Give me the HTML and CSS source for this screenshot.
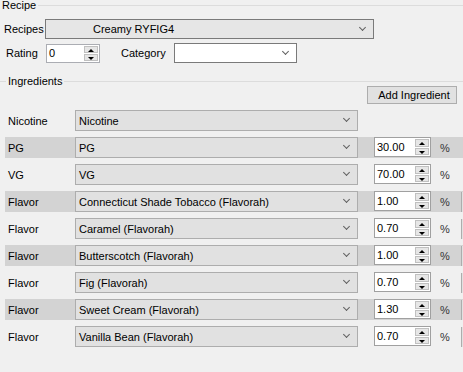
FILE: index.html
```html
<!DOCTYPE html>
<html lang="en">
<head>
  <meta charset="UTF-8">
  <title>Recipe</title>
  <link rel="stylesheet" href="styles.css">
</head>
<body>

<div class="group-head recipe-head">
  <span class="group-title">Recipe</span>
  <span class="group-line"></span>
</div>

<div class="recipe-row first">
  <span class="lbl lbl-recipes">Recipes</span>
  <div class="dropdown recipes"><span>Creamy RYFIG4</span><i class="chev"></i></div>
</div>

<div class="recipe-row second">
  <span class="lbl lbl-rating">Rating</span>
  <div class="spin rating"><span>0</span><div class="spin-btns"><i class="up"></i><i class="down"></i></div></div>
  <span class="lbl lbl-category">Category</span>
  <div class="dropdown category"><span></span><i class="chev"></i></div>
</div>

<div class="group-head ing-head">
  <span class="group-line short"></span>
  <span class="group-title">Ingredients</span>
  <span class="group-line"></span>
</div>

<div class="toolbar">
  <button class="add-btn">Add Ingredient</button>
</div>

<div class="ingredients">
  <div class="ing-row">
    <span class="ing-type">Nicotine</span>
    <div class="combo"><span>Nicotine</span><i class="chev"></i></div>
  </div>
  <div class="ing-row band">
    <span class="ing-type">PG</span>
    <div class="combo"><span>PG</span><i class="chev"></i></div>
    <div class="spin amount"><span>30.00</span><div class="spin-btns"><i class="up"></i><i class="down"></i></div></div>
    <span class="pct">%</span>
  </div>
  <div class="ing-row">
    <span class="ing-type">VG</span>
    <div class="combo"><span>VG</span><i class="chev"></i></div>
    <div class="spin amount"><span>70.00</span><div class="spin-btns"><i class="up"></i><i class="down"></i></div></div>
    <span class="pct">%</span>
  </div>
  <div class="ing-row band">
    <span class="ing-type">Flavor</span>
    <div class="combo"><span>Connecticut Shade Tobacco (Flavorah)</span><i class="chev"></i></div>
    <div class="spin amount"><span>1.00</span><div class="spin-btns"><i class="up"></i><i class="down"></i></div></div>
    <span class="pct">%</span>
    <button class="row-btn"></button>
  </div>
  <div class="ing-row">
    <span class="ing-type">Flavor</span>
    <div class="combo"><span>Caramel (Flavorah)</span><i class="chev"></i></div>
    <div class="spin amount"><span>0.70</span><div class="spin-btns"><i class="up"></i><i class="down"></i></div></div>
    <span class="pct">%</span>
    <button class="row-btn"></button>
  </div>
  <div class="ing-row band">
    <span class="ing-type">Flavor</span>
    <div class="combo"><span>Butterscotch (Flavorah)</span><i class="chev"></i></div>
    <div class="spin amount"><span>1.00</span><div class="spin-btns"><i class="up"></i><i class="down"></i></div></div>
    <span class="pct">%</span>
    <button class="row-btn"></button>
  </div>
  <div class="ing-row">
    <span class="ing-type">Flavor</span>
    <div class="combo"><span>Fig (Flavorah)</span><i class="chev"></i></div>
    <div class="spin amount"><span>0.70</span><div class="spin-btns"><i class="up"></i><i class="down"></i></div></div>
    <span class="pct">%</span>
    <button class="row-btn"></button>
  </div>
  <div class="ing-row band">
    <span class="ing-type">Flavor</span>
    <div class="combo"><span>Sweet Cream (Flavorah)</span><i class="chev"></i></div>
    <div class="spin amount"><span>1.30</span><div class="spin-btns"><i class="up"></i><i class="down"></i></div></div>
    <span class="pct">%</span>
    <button class="row-btn"></button>
  </div>
  <div class="ing-row">
    <span class="ing-type">Flavor</span>
    <div class="combo"><span>Vanilla Bean (Flavorah)</span><i class="chev"></i></div>
    <div class="spin amount"><span>0.70</span><div class="spin-btns"><i class="up"></i><i class="down"></i></div></div>
    <span class="pct">%</span>
    <button class="row-btn"></button>
  </div>
</div>

</body>
</html>
```

FILE: styles.css
```css
* {
  box-sizing: border-box;
}

body {
  margin: 0;
  width: 463px;
  height: 372px;
  overflow: hidden;
  background: #f0f0f0;
  font-family: "Liberation Sans", Arial, sans-serif;
  font-size: 11px;
  color: #000;
}

/* group box headers */
.group-head {
  display: flex;
  align-items: center;
  height: 11px;
}

.group-title {
  line-height: 11px;
  padding: 0 2px;
}

.group-line {
  flex: 1;
  height: 1px;
  background: #dcdcdc;
}

.group-line.short {
  flex: 0 0 6px;
}

/* recipe fields */
.recipe-row {
  display: flex;
  align-items: center;
}

.recipe-row > * {
  flex: none;
}

.recipe-row.first {
  margin-top: 8px;
  height: 20px;
}

.recipe-row.second {
  margin-top: 4px;
  height: 20px;
}

.lbl-recipes {
  margin-left: 4px;
  width: 41px;
}

.lbl-rating {
  margin-left: 6px;
  width: 40px;
}

.lbl-category {
  margin-left: 21px;
  width: 53px;
}

.dropdown {
  position: relative;
  height: 20px;
  border: 1px solid #7a7a7a;
  display: flex;
  align-items: center;
}

.dropdown.recipes {
  width: 329px;
  background: #e6e6e6;
  padding-left: 47px;
}

.dropdown.category {
  width: 123px;
  background: #fff;
}

.chev {
  position: absolute;
  right: 8px;
  top: 5px;
  width: 5px;
  height: 5px;
  border-right: 1px solid #606060;
  border-bottom: 1px solid #606060;
  transform: rotate(45deg);
}

/* numeric up-down */
.spin {
  position: relative;
  height: 20px;
  background: #fff;
  border: 1px solid #a0a0a0;
  display: flex;
  align-items: center;
  padding-left: 2px;
}

.spin.rating {
  width: 54px;
  height: 19px;
  border-color: #abadb3;
}

.spin-btns {
  position: absolute;
  right: 1px;
  top: 1px;
  bottom: 1px;
  width: 14px;
  display: flex;
  flex-direction: column;
  gap: 1px;
}

.spin-btns i {
  flex: 1;
  position: relative;
  background: #e6e6e6;
  border: 1px solid #c0c0c0;
}

.spin-btns i::after {
  content: "";
  position: absolute;
  left: 3px;
  width: 0;
  height: 0;
  border-left: 3px solid transparent;
  border-right: 3px solid transparent;
}

.spin-btns .up::after {
  top: 2px;
  border-bottom: 3px solid #000;
}

.spin-btns .down::after {
  top: 2px;
  border-top: 3px solid #000;
}

/* ingredients */
.ing-head {
  margin-top: 13px;
}

.toolbar {
  display: flex;
  justify-content: flex-end;
  padding-right: 6px;
  margin-top: -1px;
}

.add-btn {
  width: 90px;
  height: 18px;
  padding: 0 0 0 4px;
  background: #e1e1e1;
  border: 1px solid #adadad;
  font: inherit;
  color: #000;
}

.ingredients {
  display: flex;
  flex-direction: column;
  gap: 6px;
  margin-top: 6px;
}

.ing-row {
  display: flex;
  align-items: center;
  height: 21px;
  margin-left: 5px;
  padding-left: 3px;
}

.ing-row > * {
  flex: none;
}

.ing-row.band {
  background: #d3d3d3;
}

.ing-type {
  width: 67px;
}

.combo {
  position: relative;
  width: 283px;
  height: 21px;
  background: #e1e1e1;
  border: 1px solid #adadad;
  display: flex;
  align-items: center;
  padding-left: 3px;
}

.spin.amount {
  width: 57px;
  margin-left: 16px;
  align-self: flex-start;
}

.pct {
  width: 30px;
  padding-left: 9px;
  color: #333;
}

/* edge of the next control, clipped by the window */
.row-btn {
  width: 2px;
  height: 20px;
  padding: 0;
  background: #e1e1e1;
  border: none;
  border-left: 1px solid #adadad;
}
```
